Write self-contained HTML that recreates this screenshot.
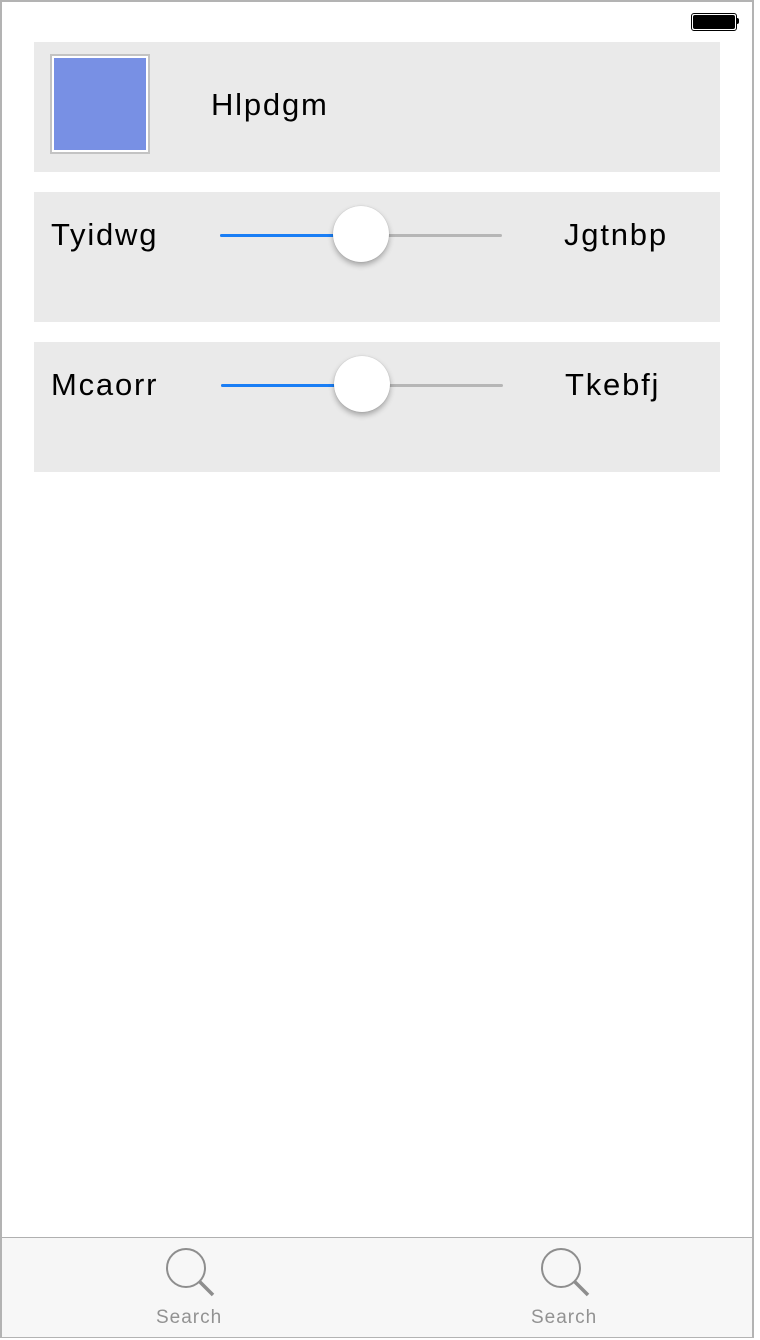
<!DOCTYPE html>
<html><head><style>
body{margin:0;width:760px;height:1340px;background:#fff;font-family:"Liberation Sans",sans-serif;position:relative;overflow:hidden}
.frame{position:absolute;left:0;top:0;width:750px;height:1334px;border:2px solid #b3b3b3}
.panel{position:absolute;left:34px;width:686px;height:130px;background:#eaeaea}
.t{position:absolute;font-size:31px;color:#000;line-height:1;letter-spacing:1.8px}
.track{position:absolute;height:3px;border-radius:2px}
.thumb{position:absolute;width:56px;height:56px;border-radius:50%;background:#fff;box-shadow:0 3px 6px rgba(0,0,0,.3),0 0 1px rgba(0,0,0,.2)}
.tab{position:absolute;top:1237px;left:2px;width:750px;height:99px;background:#f7f7f7;border-top:1px solid #b0b0b0}
.lbl{position:absolute;font-size:19px;color:#929292;letter-spacing:1px}
</style></head><body>
<div class="frame"></div>
<div style="position:absolute;left:691px;top:13px;width:42px;height:14px;border:1px solid #000;border-radius:3px;padding:1px;"><div style="width:100%;height:100%;background:#000;border-radius:2px"></div></div>
<div style="position:absolute;left:737px;top:18px;width:2px;height:6px;background:#000;border-radius:0 2px 2px 0"></div>

<div class="panel" style="top:42px"></div>
<div style="position:absolute;left:50px;top:54px;width:96px;height:96px;border:2px solid #c3c3c3;background:#fff"><div style="position:absolute;left:2px;top:2px;width:92px;height:92px;background:#7890e4"></div></div>
<div class="t" style="left:211px;top:89px">Hlpdgm</div>

<div class="panel" style="top:192px"></div>
<div class="t" style="left:51px;top:219px">Tyidwg</div>
<div class="t" style="left:564px;top:219px">Jgtnbp</div>
<div class="track" style="left:220px;top:234px;width:282px;background:#b6b6b6"></div>
<div class="track" style="left:220px;top:234px;width:120px;background:#1a7ef5"></div>
<div class="thumb" style="left:333px;top:206px"></div>

<div class="panel" style="top:342px"></div>
<div class="t" style="left:51px;top:369px">Mcaorr</div>
<div class="t" style="left:565px;top:369px">Tkebfj</div>
<div class="track" style="left:221px;top:384px;width:282px;background:#b6b6b6"></div>
<div class="track" style="left:221px;top:384px;width:120px;background:#1a7ef5"></div>
<div class="thumb" style="left:334px;top:356px"></div>

<div class="tab"></div>
<svg style="position:absolute;left:162px;top:1245px" width="56" height="56"><circle cx="24" cy="23" r="19" fill="none" stroke="#8e8e8e" stroke-width="2"/><line x1="37" y1="36" x2="51" y2="50" stroke="#8e8e8e" stroke-width="3.5"/></svg>
<svg style="position:absolute;left:537px;top:1245px" width="56" height="56"><circle cx="24" cy="23" r="19" fill="none" stroke="#8e8e8e" stroke-width="2"/><line x1="37" y1="36" x2="51" y2="50" stroke="#8e8e8e" stroke-width="3.5"/></svg>
<div class="lbl" style="left:156px;top:1307px">Search</div>
<div class="lbl" style="left:531px;top:1307px">Search</div>
</body></html>
